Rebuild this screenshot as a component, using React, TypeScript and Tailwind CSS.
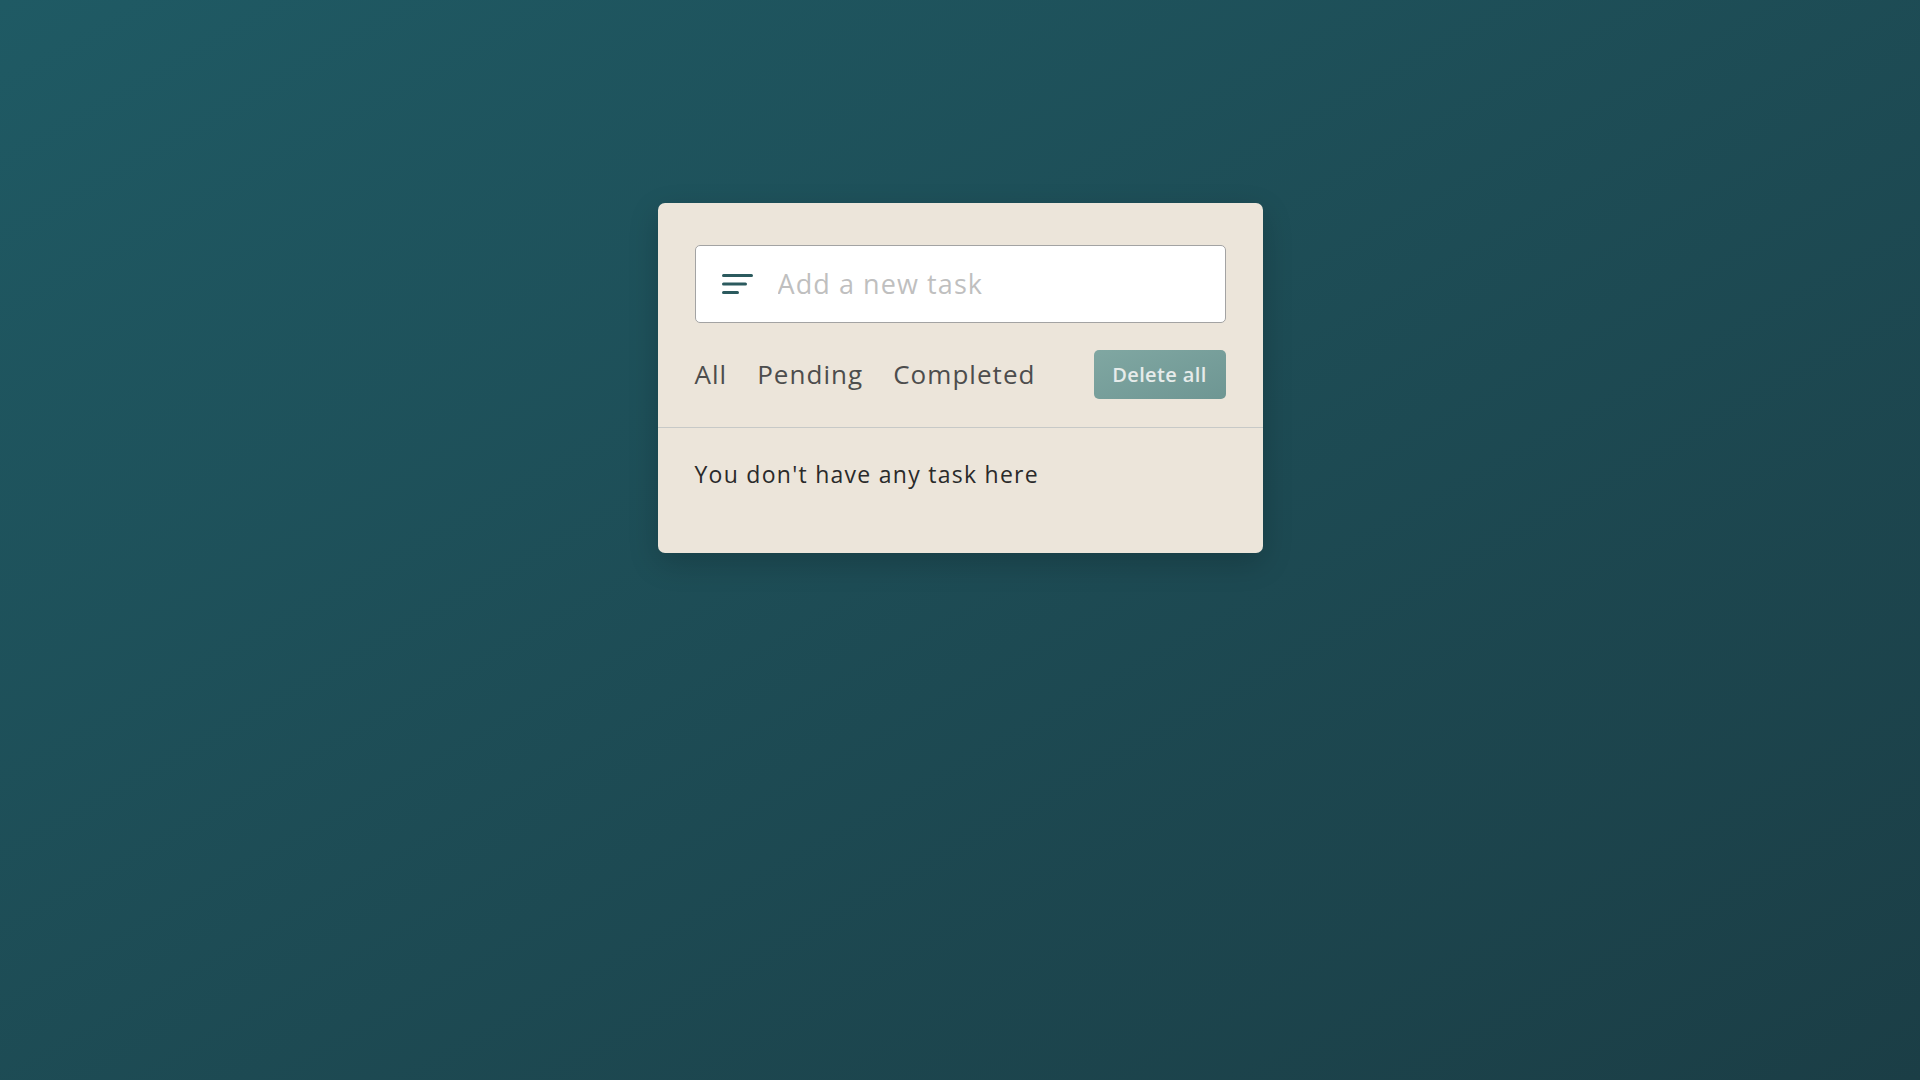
import React from 'react';

const filters = ['All', 'Pending', 'Completed'];

function MenuIcon() {
  return (
    <svg width="31" height="22" viewBox="0 0 31 22" className="shrink-0">
      <rect x="0" y="1" width="31" height="3" rx="1.5" fill="#2b5a5e" />
      <rect x="0" y="9.5" width="25" height="3" rx="1.5" fill="#2b5a5e" />
      <rect x="0" y="18" width="17" height="3" rx="1.5" fill="#2b5a5e" />
    </svg>
  );
}

export default function App() {
  return (
    <div
      className="min-h-screen w-full bg-gradient-to-br from-[#1f5a64] to-[#1b3e46] pt-[203px]"
      style={{ fontFamily: '"Open Sans", Inter, sans-serif' }}
    >
      <div className="mx-auto w-[605px] rounded-[7px] bg-[#ece5da] shadow-[0_10px_30px_rgba(0,0,0,0.18)]">
        <div className="px-[37px] pt-[42px] pb-[28px] border-b border-[#c7c9c7]">
          <div className="flex h-[78px] items-center gap-[25px] rounded-[5px] border-[1.5px] border-[#a3a3a3] bg-white px-[26px]">
            <MenuIcon />
            <input
              type="text"
              placeholder="Add a new task"
              className="w-full bg-transparent text-[27px] tracking-[0.04em] text-[#333] outline-none placeholder:text-[#bfbfbf]"
            />
          </div>
          <div className="mt-[27px] flex h-[49px] items-center justify-between">
            <div className="flex items-center gap-[30px] text-[26px] tracking-[0.04em] text-[#4d4d4d]">
              {filters.map((f) => (
                <span key={f}>{f}</span>
              ))}
            </div>
            <button className="h-[49px] w-[132px] rounded-[5px] bg-gradient-to-br from-[#80a7a2] to-[#6e9693] text-[20px] font-semibold tracking-[0.02em] text-[#e6ebea]">
              Delete all
            </button>
          </div>
        </div>
        <div className="px-[37px] pt-[30px] pb-[62px]">
          <p className="text-[23px] leading-[33px] tracking-[0.055em] text-[#2a2a2a]">You don't have any task here</p>
        </div>
      </div>
    </div>
  );
}
